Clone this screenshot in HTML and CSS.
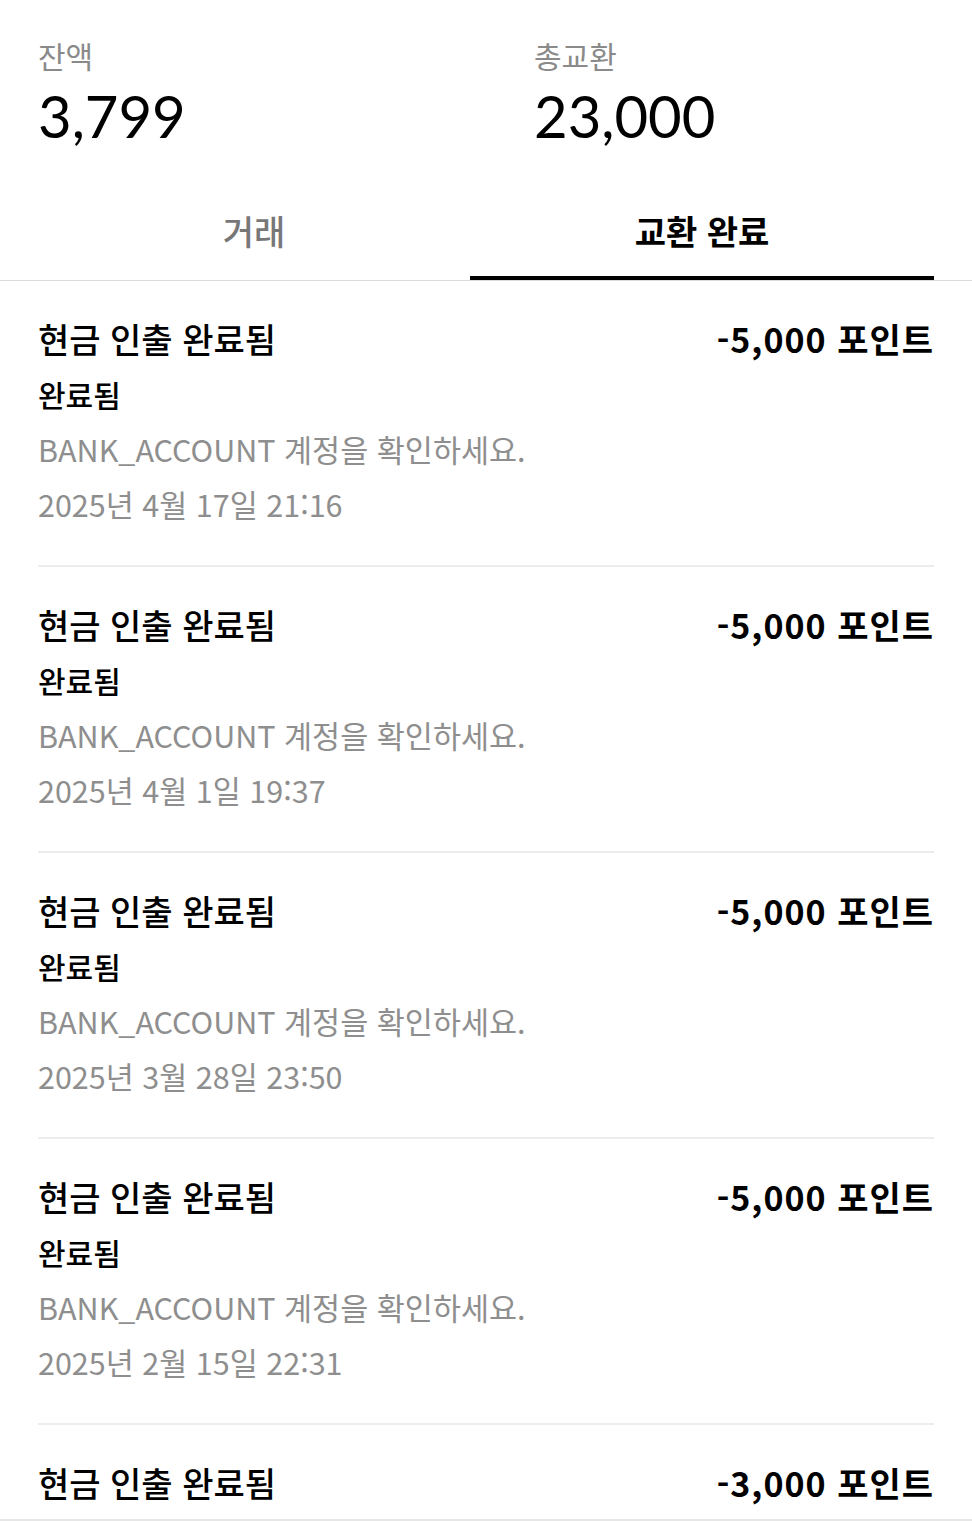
FILE: index.html
```html
<!DOCTYPE html>
<html lang="ko">
<head>
  <meta charset="UTF-8">
  <title>교환 완료</title>
  <link rel="stylesheet" href="styles.css">
</head>
<body>

  <div class="resumo">
    <div class="bloco">
      <div class="rotulo">잔액</div>
      <div class="valor">3,799</div>
    </div>
    <div class="bloco">
      <div class="rotulo">총교환</div>
      <div class="valor">23,000</div>
    </div>
  </div>

  <div class="abas">
    <div class="aba">거래</div>
    <div class="aba ativa">교환 완료</div>
  </div>

  <div class="lista">
    <div class="item">
      <div class="linhaTopo">
        <span class="titulo">현금 인출 완료됨</span>
        <span class="quantia">-5,000 포인트</span>
      </div>
      <div class="estado">완료됨</div>
      <div class="info">BANK_ACCOUNT 계정을 확인하세요.</div>
      <div class="info">2025년 4월 17일 21:16</div>
    </div>
    <div class="item">
      <div class="linhaTopo">
        <span class="titulo">현금 인출 완료됨</span>
        <span class="quantia">-5,000 포인트</span>
      </div>
      <div class="estado">완료됨</div>
      <div class="info">BANK_ACCOUNT 계정을 확인하세요.</div>
      <div class="info">2025년 4월 1일 19:37</div>
    </div>
    <div class="item">
      <div class="linhaTopo">
        <span class="titulo">현금 인출 완료됨</span>
        <span class="quantia">-5,000 포인트</span>
      </div>
      <div class="estado">완료됨</div>
      <div class="info">BANK_ACCOUNT 계정을 확인하세요.</div>
      <div class="info">2025년 3월 28일 23:50</div>
    </div>
    <div class="item">
      <div class="linhaTopo">
        <span class="titulo">현금 인출 완료됨</span>
        <span class="quantia">-5,000 포인트</span>
      </div>
      <div class="estado">완료됨</div>
      <div class="info">BANK_ACCOUNT 계정을 확인하세요.</div>
      <div class="info">2025년 2월 15일 22:31</div>
    </div>
    <div class="item ultimo">
      <div class="linhaTopo">
        <span class="titulo">현금 인출 완료됨</span>
        <span class="quantia">-3,000 포인트</span>
      </div>
    </div>
  </div>
  <div class="rodape"></div>

</body>
</html>
```

FILE: styles.css
```css
body {
  margin: 0;
  background: #fff;
  color: #000;
  font-family: "Noto Sans CJK KR", "Noto Sans", sans-serif;
}
.resumo {
  display: grid;
  grid-template-columns: 496px 1fr;
  padding: 34px 38px 0;
}
.rotulo {
  font-size: 30px;
  line-height: 42px;
  color: #8a8a8a;
}
.valor {
  font-family: Lato, "Noto Sans", sans-serif;
  font-size: 58px;
  line-height: 72px;
  margin-top: 4px;
}
.abas {
  display: grid;
  grid-template-columns: 432px 464px;
  padding: 55px 38px 0;
  border-bottom: 1px solid #dcdcdc;
}
.aba {
  text-align: center;
  font-size: 34px;
  font-weight: 500;
  color: #777;
  line-height: 48px;
  padding-bottom: 21px;
  border-bottom: 4px solid transparent;
}
.aba.ativa {
  color: #000;
  font-weight: 700;
  border-bottom-color: #000;
}
.lista {
  padding: 0 38px;
}
.item {
  padding: 30px 0 33px;
  border-bottom: 2px solid #ececec;
}
.item.ultimo {
  padding-bottom: 8px;
  border-bottom: none;
}
.rodape {
  border-top: 2px solid #e6e6e6;
}
.linhaTopo {
  display: flex;
  justify-content: space-between;
  line-height: 56px;
}
.titulo {
  font-size: 34px;
  font-weight: 500;
}
.quantia {
  font-size: 34px;
  font-weight: 700;
  letter-spacing: 1px;
}
.estado {
  font-size: 30px;
  font-weight: 500;
  line-height: 55px;
}
.info {
  font-size: 30.5px;
  line-height: 55px;
  color: #8e8e8e;
}
```
